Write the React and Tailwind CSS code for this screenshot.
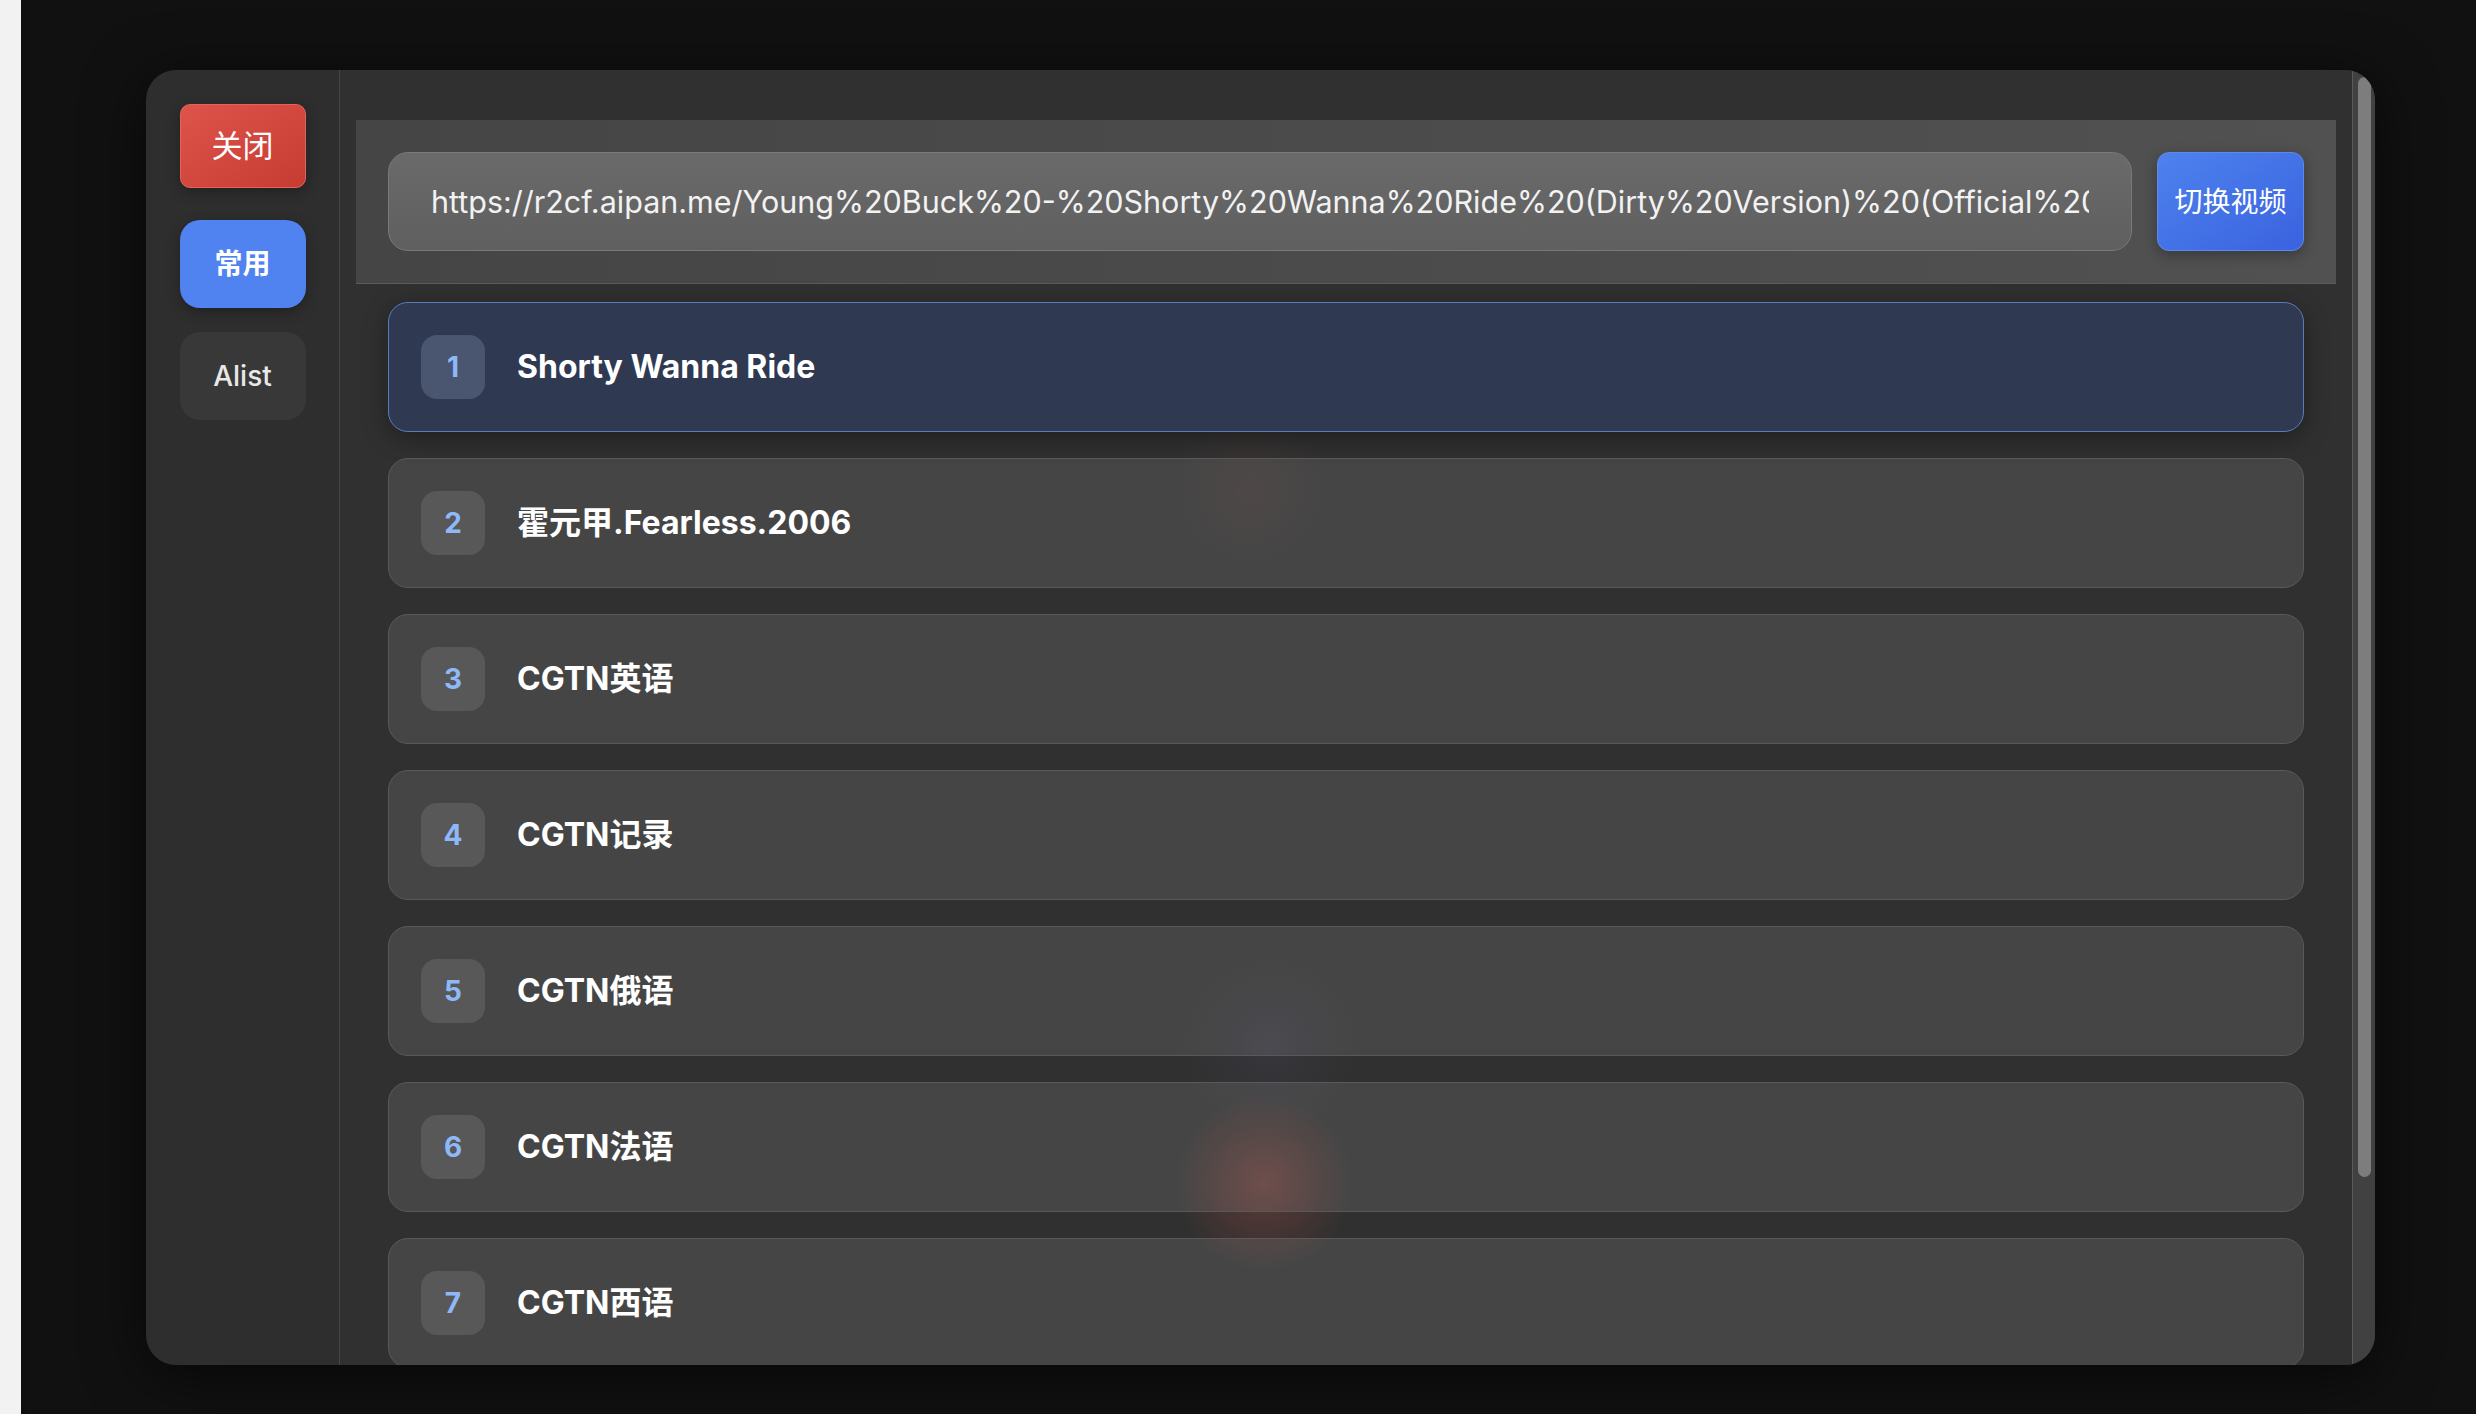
const url =
  "https://r2cf.aipan.me/Young%20Buck%20-%20Shorty%20Wanna%20Ride%20(Dirty%20Version)%20(Official%20Music%20Video).mp4";

const items = [
  "Shorty Wanna Ride",
  "霍元甲.Fearless.2006",
  "CGTN英语",
  "CGTN记录",
  "CGTN俄语",
  "CGTN法语",
  "CGTN西语",
];

function Item({ n, title, active }) {
  return (
    <div
      className={
        "flex h-[130px] shrink-0 items-center gap-8 rounded-[20px] border px-8 " +
        (active
          ? "border-[#5a7cbb] bg-[#2f3a53]/95 shadow-[0_6px_24px_rgba(0,0,0,0.35)]"
          : "border-[#595959] bg-white/[0.1]")
      }
    >
      <div
        className={
          "flex h-16 w-16 shrink-0 items-center justify-center rounded-2xl text-[28px] font-bold text-[#8fb8f8] " +
          (active ? "bg-[#4a5570]" : "bg-white/[0.1]")
        }
      >
        {n}
      </div>
      <span className="text-[32px] font-bold text-white">{title}</span>
    </div>
  );
}

export default function App() {
  return (
    <div className="flex h-screen w-full overflow-hidden bg-[#111111] font-['Inter','Noto_Sans_CJK_SC',sans-serif]">
      <div className="w-[21px] shrink-0 bg-[#f2f2f2] shadow-[2px_0_6px_rgba(0,0,0,0.25)]" />

      <div className="flex min-w-0 flex-1 pl-[125px] pr-[101px] pt-[70px] pb-[49px]">
        <div className="flex min-w-0 flex-1 overflow-hidden rounded-[30px] bg-[#2e2e2e] shadow-[0_10px_60px_rgba(0,0,0,0.6)]">
          {/* sidebar */}
          <div className="flex w-[194px] shrink-0 flex-col items-center border-r border-[#464646] pt-[34px]">
            <button className="h-[84px] w-[126px] rounded-[10px] border border-[#e0645b] bg-gradient-to-br from-[#de544b] to-[#c63b32] text-[31px] text-white shadow-[0_4px_14px_rgba(0,0,0,0.3)]">
              关闭
            </button>
            <button className="mt-8 h-[88px] w-[126px] rounded-[20px] bg-[#5083ef] text-[28px] font-bold text-white shadow-[0_4px_14px_rgba(0,0,0,0.3)]">
              常用
            </button>
            <button className="mt-6 h-[88px] w-[126px] rounded-[20px] bg-[#383838] text-[28px] font-medium text-[#e8e8e8]">
              Alist
            </button>
          </div>

          {/* content */}
          <div className="flex min-w-0 flex-1 flex-col overflow-hidden bg-[#303030] bg-[radial-gradient(circle_at_924px_1113px,rgba(190,80,70,0.32),transparent_90px),radial-gradient(circle_at_930px_975px,rgba(110,110,170,0.1),transparent_90px),radial-gradient(circle_at_910px_420px,rgba(150,80,70,0.1),transparent_80px)] px-4 pt-[50px]">
            <div className="flex shrink-0 items-center gap-[25px] border-b border-[#5c5c5c] bg-gradient-to-r from-[#454545] to-[#515151] p-8">
              <div className="flex h-[99px] min-w-0 flex-1 items-center rounded-[20px] border-[1.5px] border-[#797979] bg-gradient-to-b from-[#6a6a6a] to-[#5f5f5f] px-[42px]">
                <input
                  readOnly
                  value={url}
                  className="min-w-0 flex-1 bg-transparent text-[30.5px] text-[#f2f2f2] outline-none"
                />
              </div>
              <button className="h-[99px] w-[147px] shrink-0 rounded-[12px] border border-[#5a8af0] bg-gradient-to-br from-[#4e82ee] to-[#3a62df] text-[28px] text-white shadow-[0_4px_14px_rgba(0,0,0,0.3)]">
                切换视频
              </button>
            </div>

            <div className="mt-[18px] flex flex-col gap-[26px] px-8">
              {items.map((t, i) => (
                <Item key={t} n={i + 1} title={t} active={i === 0} />
              ))}
            </div>
          </div>

          {/* scrollbar */}
          <div className="flex w-[23px] shrink-0 flex-col border-l border-[#5a5a5a] bg-[#414141] pt-[7px]">
            <div className="mx-auto h-[1100px] w-[13px] rounded-full bg-[#7d7d7d]" />
          </div>
        </div>
      </div>
    </div>
  );
}
